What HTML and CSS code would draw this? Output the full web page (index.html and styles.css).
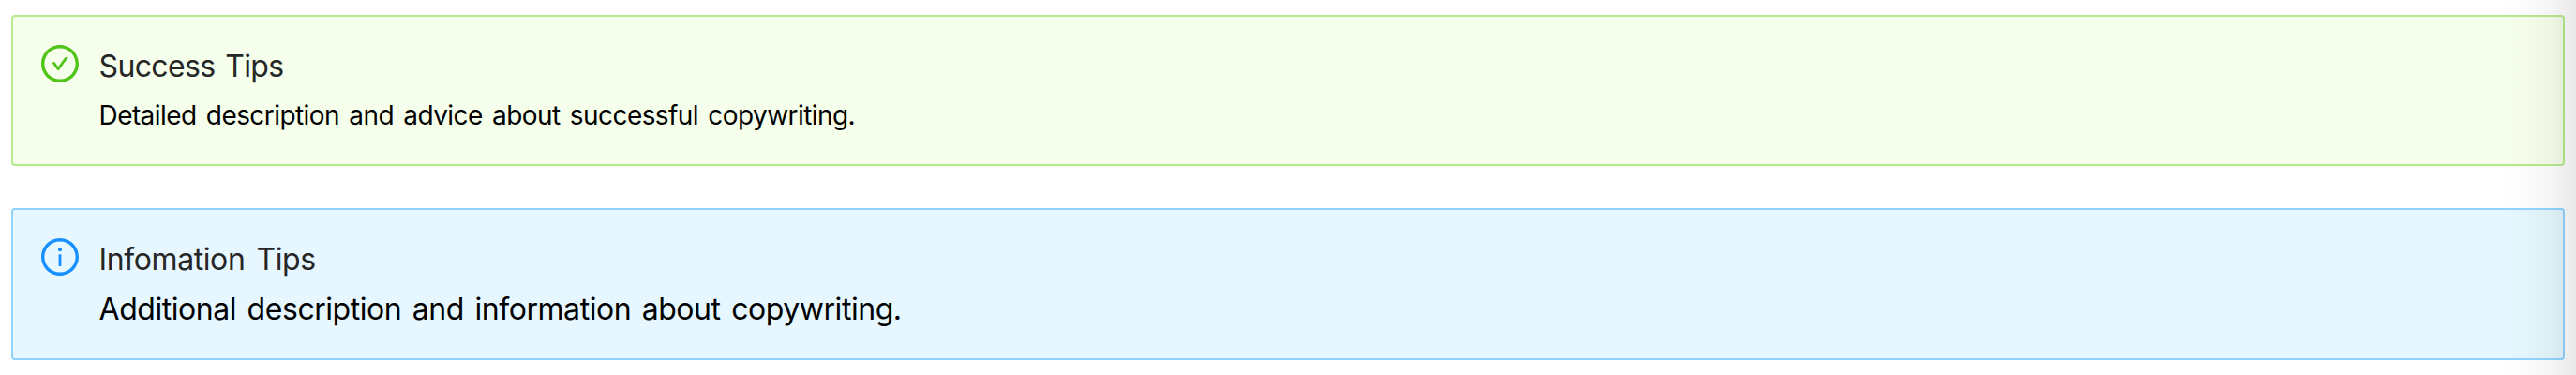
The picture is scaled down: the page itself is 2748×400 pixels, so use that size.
FILE: index.html
```html
<!DOCTYPE html>
<html lang="en">
<head>
<meta charset="utf-8">
<title>Alerts</title>
<link rel="stylesheet" href="styles.css">
</head>
<body>
<main class="alerts">
  <section class="alert alert-success">
    <svg class="alert-icon" viewBox="64 64 896 896" fill="currentColor" aria-hidden="true">
      <path d="M699 353h-46.900c-10.200 0-19.900 4.900-25.900 13.300L469 584.300l-71.200-98.800c-6-8.300-15.600-13.300-25.900-13.300H325c-6.500 0-10.300 7.400-6.500 12.700l124.600 172.800a31.800 31.800 0 0 0 51.700 0l210.600-292c3.900-5.300.1-12.700-6.400-12.700z"/>
      <path d="M512 64C264.600 64 64 264.600 64 512s200.600 448 448 448 448-200.600 448-448S759.400 64 512 64zm0 820c-205.400 0-372-166.600-372-372s166.600-372 372-372 372 166.600 372 372-166.600 372-372 372z"/>
    </svg>
    <div class="alert-content">
      <div class="alert-message">Success Tips</div>
      <div class="alert-description">Detailed description and advice about successful copywriting.</div>
    </div>
  </section>
  <section class="alert alert-info">
    <svg class="alert-icon" viewBox="64 64 896 896" fill="currentColor" aria-hidden="true">
      <path d="M512 64C264.600 64 64 264.600 64 512s200.600 448 448 448 448-200.600 448-448S759.400 64 512 64zm0 820c-205.400 0-372-166.600-372-372s166.600-372 372-372 372 166.600 372 372-166.600 372-372 372z"/>
      <path d="M464 336a48 48 0 1 0 96 0 48 48 0 1 0-96 0zm72 112h-48c-4.400 0-8 3.600-8 8v272c0 4.400 3.600 8 8 8h48c4.400 0 8-3.600 8-8V456c0-4.400-3.600-8-8-8z"/>
    </svg>
    <div class="alert-content">
      <div class="alert-message">Infomation Tips</div>
      <div class="alert-description">Additional description and information about copywriting.</div>
    </div>
  </section>
</main>
<div class="edge-shade"></div>
</body>
</html>
```
FILE: styles.css
```css
* { box-sizing: border-box; }
body {
  margin: 0;
  height: 400px;
  overflow: hidden;
  background: #fff;
  font-family: Inter, "Liberation Sans", sans-serif;
  white-space: nowrap;
}
.alerts {
  display: flex;
  flex-direction: column;
  gap: 45px;
  padding: 16px 12px;
}
.alert {
  display: flex;
  align-items: flex-start;
  gap: 21.5px;
  padding: 30px;
  border: 2px solid;
  border-radius: 4px;
}
.alert-success { height: 161px; background: #f6ffeb; border-color: #b7eb8f; }
.alert-info { height: 162px; background: #e6f7ff; border-color: #91d5ff; }
.alert-icon { width: 40px; height: 40px; flex: none; }
.alert-success .alert-icon { color: #52c41a; }
.alert-info .alert-icon { color: #1890ff; }
.alert-message {
  height: 54px;
  line-height: 45px;
  font-size: 32px;
  letter-spacing: -.65px;
  word-spacing: 2.5px;
  color: #262626;
}
.alert-info .alert-message {
  letter-spacing: -.4px;
  word-spacing: 3.5px;
}
.alert-description {
  line-height: 42px;
  font-size: 28px;
  letter-spacing: -.57px;
  word-spacing: 3px;
  color: #000;
}
.alert-info .alert-description {
  line-height: 44px;
  font-size: 32px;
  letter-spacing: -.45px;
  word-spacing: 3px;
}
.edge-shade {
  position: absolute;
  top: 0;
  right: 0;
  width: 78px;
  height: 400px;
  background: linear-gradient(to right, rgba(0,0,0,0), rgba(0,0,0,.01) 30%, rgba(0,0,0,.035) 65%, rgba(0,0,0,.065) 85%, rgba(0,0,0,.09));
}
```
